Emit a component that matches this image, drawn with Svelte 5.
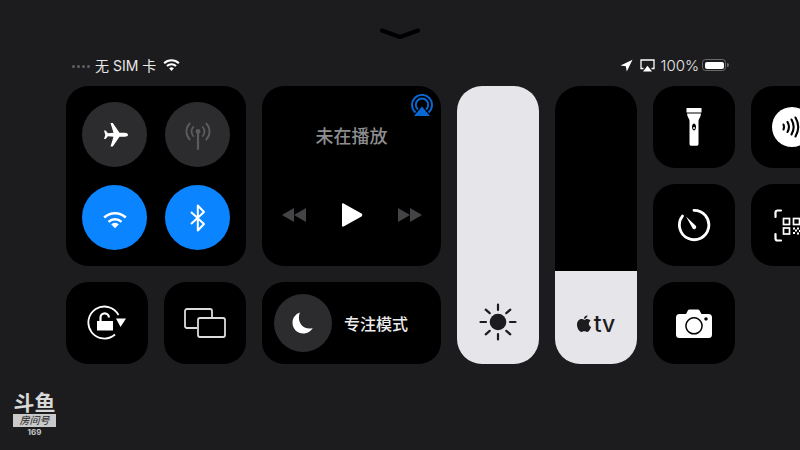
<script lang="ts">
const wifiArcs = ['M3 9.6a13 13 0 0 1 18 0', 'M6.6 13.2a8 8 0 0 1 10.8 0'];
</script>

<div class="page">
  <div class="grabber">
    <svg width="40" height="12" viewBox="0 0 40 12"><path d="M2 2.5 20 9 38 2.5" fill="none" stroke="#000" stroke-width="4" stroke-linecap="round" stroke-linejoin="round" /></svg>
  </div>

  <div class="status">
    <div class="status-left">
      <span class="dots"><i></i><i></i><i></i><i></i></span>
      <span class="carrier">无 SIM 卡</span>
      <svg class="wifi-small" width="17" height="14" viewBox="0 0 24 20">
        <path d="M1.5 7.500a15 15 0 0 1 21 0" fill="none" stroke="#fff" stroke-width="3" />
        <path d="M5.500 11.500a9.500 9.500 0 0 1 13 0" fill="none" stroke="#fff" stroke-width="3" />
        <path d="M12 18.500 8.600 14.800a5 5 0 0 1 6.800 0z" fill="#fff" />
      </svg>
    </div>
    <div class="status-right">
      <svg width="13" height="13" viewBox="0 0 13 13"><path d="M12.500.8 6.800 12.500 5.800 7.300.5 6.400z" fill="#fff" /></svg>
      <svg class="airplay-small" width="15" height="13" viewBox="0 0 15 13">
        <path d="M3.500 9.500H1V1h13v8.500h-2.500" fill="none" stroke="#fff" stroke-width="1.300" />
        <path d="M7.500 6.800 12 12.500H3z" fill="#fff" />
      </svg>
      <span class="percent">100%</span>
      <div class="battery"><div class="charge"></div></div>
      <div class="nub"></div>
    </div>
  </div>

  <div class="grid">
    <div class="tile connectivity">
      <div class="circle">
        <svg width="30" height="30" viewBox="0 0 30 30"><path d="M28 15c0-1.400-1.500-2.200-3.200-2.200h-5.300L12.800 3h-2.300l3 9.800-5.600.5-2.300-2.800H4l1.300 4.500L4 19h1.600l2.300-2.800 5.600.5-3 9.800h2.300l6.700-9.800h5.300c1.700 0 3.200-.8 3.200-1.700z" fill="#fff" /></svg>
      </div>
      <div class="circle">
        <svg width="30" height="32" viewBox="0 0 30 32" fill="none" stroke="#5c5c5e" stroke-width="1.800" stroke-linecap="round">
          <path d="M15 15v15" stroke-width="2.200" />
          <circle cx="15" cy="12.500" r="2.400" fill="#5c5c5e" stroke="none" />
          <path d="M10.300 17a6.500 6.500 0 0 1 0-9" />
          <path d="M19.700 8a6.500 6.500 0 0 1 0 9" />
          <path d="M6.700 20.500a11.500 11.500 0 0 1 0-16" />
          <path d="M23.300 4.500a11.500 11.500 0 0 1 0 16" />
        </svg>
      </div>
      <div class="circle on">
        <svg width="30" height="24" viewBox="0 0 24 20" fill="none" stroke="#fff" stroke-width="2.100">
          {#each wifiArcs as d}<path {d} />{/each}
          <path d="M12 18.500 8.800 15.300a4.600 4.600 0 0 1 6.400 0z" fill="#fff" stroke="none" />
        </svg>
      </div>
      <div class="circle on">
        <svg width="20" height="28" viewBox="0 0 20 28"><path d="M3 8 16 20 9.800 26.500V1.500L16 8 3 20" fill="none" stroke="#fff" stroke-width="2" stroke-linejoin="round" /></svg>
      </div>
    </div>

    <div class="tile media">
      <svg class="airplay" width="24" height="24" viewBox="0 0 24 24" fill="none" stroke="#0a68d4" stroke-width="1.900">
        <path d="M5.500 18.500a10 10 0 1 1 13 0" />
        <path d="M8 15.500a6.200 6.200 0 1 1 8 0" />
        <path d="M12 12.500 20 22H4z" fill="#0a68d4" stroke="none" />
      </svg>
      <div class="title">未在播放</div>
      <div class="controls">
        <svg width="24" height="14" viewBox="0 0 24 14" fill="#444446"><path d="M12 0v14L0 7z" /><path d="M24 0v14L12 7z" /></svg>
        <svg width="22" height="24" viewBox="0 0 22 24"><path d="M1 1.500c0-1 .8-1.400 1.600-1L20.500 10.600c1 .6 1 2.200 0 2.800L2.600 23.500c-.8.4-1.600 0-1.600-1z" fill="#fff" /></svg>
        <svg width="24" height="14" viewBox="0 0 24 14" fill="#444446"><path d="M0 0v14l12-7z" /><path d="M12 0v14l12-7z" /></svg>
      </div>
    </div>

    <div class="tile brightness">
      <svg width="40" height="40" viewBox="0 0 40 40" stroke="#1c1c1e" stroke-width="2.200" stroke-linecap="round">
        <circle cx="20" cy="20" r="8.300" fill="#1c1c1e" stroke="none" />
        <path d="M20 2.500v5.500M20 32v5.500M2.500 20H8M32 20h5.500M7.700 7.700l4 3.500M28.300 28.800l4 3.500M7.700 32.300l4-3.500M28.300 11.200l4-3.500" />
      </svg>
    </div>

    <div class="tile volume">
      <div class="fill">
        <svg width="15" height="18" viewBox="0 0 17 20"><path d="M11.800 0c.2 1.700-1.600 4.200-3.900 4C7.600 2 9.600.2 11.800 0zM8.100 5.200c1 0 2-.9 3.600-.9 1.500 0 2.900.8 3.700 2-2.900 1.800-2.400 5.900.6 7.100-.8 2.200-2.600 5.600-4.500 5.600-1.200 0-1.800-.8-3.200-.8s-2.100.8-3.200.8C2.700 19 0 14.700 0 10.800c0-3.800 2.400-6.400 5-6.400 1.400 0 2.300.8 3.100.8z" fill="#1c1c1e" /></svg>
        <span class="tv">tv</span>
      </div>
    </div>

    <div class="tile flash">
      <svg width="16" height="38" viewBox="0 0 16 38" fill="#fff">
        <path d="M.5 0h15v4.500H.5z" />
        <path fill-rule="evenodd" d="M1 5.500h14c0 3.500-2.500 5-2.500 7.500v23c0 1-.7 1.800-1.800 1.800H5.300c-1.100 0-1.800-.8-1.800-1.800V13C3.500 10.500 1 9 1 5.500zM8 15.500a2 3.500 0 1 0 .01 0z" />
        <circle cx="8" cy="20" r="1" />
      </svg>
    </div>

    <div class="tile nfc-tile">
      <div class="nfc">
        <svg width="20" height="22" viewBox="0 0 20 22" fill="none" stroke="#000" stroke-width="2.100" stroke-linecap="round">
          <path d="M1.500 8.500a6 6 0 0 1 0 5" />
          <path d="M5.500 6a10 10 0 0 1 0 10" />
          <path d="M9.500 3.500a15 15 0 0 1 0 15" />
          <path d="M13.500 1.500a19 19 0 0 1 0 19" />
        </svg>
      </div>
    </div>

    <div class="tile timer">
      <svg width="34" height="34" viewBox="0 0 34 34" fill="none" stroke="#fff" stroke-width="2.800" stroke-linecap="round">
        <path d="M17 2.300A14.700 14.700 0 1 1 5.500 8" />
        <path d="M9 8.500 19 18a2.200 2.200 0 0 1-3.200 2.800z" fill="#fff" stroke="none" />
      </svg>
    </div>

    <div class="tile qr-tile">
      <svg width="36" height="33" viewBox="0 0 36 33" fill="none" stroke="#fff">
        <g stroke-width="2.200" stroke-linecap="round">
          <path d="M7 1.500H3.500a2 2 0 0 0-2 2V8M29 1.500h3.500a2 2 0 0 1 2 2V8M7 31.500H3.500a2 2 0 0 1-2-2V25M29 31.500h3.500a2 2 0 0 0 2-2V25" />
        </g>
        <g stroke-width="1.700">
          <rect x="9.500" y="9.500" width="6" height="6" />
          <rect x="19.500" y="9.500" width="6" height="6" />
          <rect x="9.500" y="19" width="6" height="6" />
        </g>
        <path d="M19 18.500h2v2h-2zM23 18.500h2v2h-2zM21 20.500h2v2h-2zM25 21h2v2h-2zM19 23h2v2h-2zM23 23.500h2v2h-2z" fill="#fff" stroke="none" />
      </svg>
    </div>

    <div class="tile camera">
      <svg width="36" height="29" viewBox="0 0 36 29">
        <path fill-rule="evenodd" d="M3.500 5H10l2-3.700c.3-.5.800-.8 1.400-.8h8.600c.6 0 1.100.3 1.400.8L25.500 5H32.500A3.500 3.500 0 0 1 36 8.500v17a3.500 3.500 0 0 1-3.500 3.500h-29A3.500 3.500 0 0 1 0 25.500v-17A3.500 3.500 0 0 1 3.500 5zM18 8a8.800 8.800 0 1 0 .01 0zM18 9.500a7.300 7.300 0 1 1-.01 0zM30 8.200a1.700 1.700 0 1 0 .01 0z" fill="#fff" />
      </svg>
    </div>

    <div class="tile rotation">
      <svg width="40" height="38" viewBox="0 0 40 38" fill="none" stroke="#fff" stroke-width="1.800">
        <path d="M28 30.500A16 16 0 1 1 31.500 11" />
        <path d="M29 14.500h10L33.500 23z" fill="#fff" stroke="none" />
        <path d="M10 17h16v9.500H10z" fill="#fff" stroke="none" />
        <path d="M13.500 17v-3.500a4.200 4.200 0 0 1 8.400 0" stroke-width="2.200" />
      </svg>
    </div>

    <div class="tile mirror">
      <svg width="42" height="30" viewBox="0 0 42 30" fill="none" stroke="#dcdcdc" stroke-width="1.800">
        <path d="M13 20H2.900A2 2 0 0 1 1 18V3a2 2 0 0 1 2-2h23a2 2 0 0 1 2 2v6" />
        <rect x="14" y="10" width="27" height="19" rx="2" />
      </svg>
    </div>

    <div class="tile focus">
      <div class="moon-circle">
        <svg width="24" height="24" viewBox="0 0 24 24"><path d="M8.800 1.500C4.500 3 1.500 7 1.500 11.700c0 6 4.800 10.800 10.800 10.800 4 0 7.500-2.200 9.400-5.500-1 .4-2.200.6-3.300.6-6 0-10.500-4.700-10.500-10.500 0-2 .3-3.700.9-5.600z" fill="#fff" /></svg>
      </div>
      <span class="focus-label">专注模式</span>
    </div>
  </div>

  <div class="watermark">
    <div class="brand">斗鱼</div>
    <div class="room">房间号</div>
    <div class="room-id">169</div>
  </div>
</div>

<style>
:global(body) {
  background: #1c1c1e;
}

.page {
  position: relative;
  box-sizing: border-box;
  width: 800px;
  height: 450px;
  padding-top: 28px;
  overflow: hidden;
  font-family: Inter, "Noto Sans CJK SC", sans-serif;
  background: #1c1c1e;
}

.grabber {
  display: flex;
  justify-content: center;
  height: 12px;
}

.status {
  display: flex;
  align-items: center;
  justify-content: space-between;
  height: 20px;
  margin-top: 15px;
  padding: 0 71px 0 72px;
  color: #e8e8e8;
}

.status-left,
.status-right {
  display: flex;
  align-items: center;
}

.dots {
  display: flex;
  gap: 2px;
  margin-top: 3px;
}

.dots i {
  width: 3px;
  height: 3px;
  background: #5f5f61;
  border-radius: 50%;
}

.carrier {
  margin-left: 5px;
  font-size: 14px;
}

.wifi-small {
  margin-left: 7px;
}

.airplay-small {
  margin-left: 7px;
}

.percent {
  margin-left: 6px;
  font-size: 15px;
  font-weight: 300;
}

.battery {
  box-sizing: border-box;
  width: 24px;
  height: 12px;
  margin-left: 3px;
  padding: 1.500px;
  border: 1px solid #6a6a6c;
  border-radius: 3.500px;
}

.charge {
  width: 100%;
  height: 100%;
  background: #fff;
  border-radius: 2px;
}

.nub {
  width: 2px;
  height: 4px;
  margin-left: 1px;
  background: #6a6a6c;
  border-radius: 0 2px 2px 0;
}

.grid {
  display: grid;
  grid-template-columns: 82px 82px 82px 81px 82px 82px 82px 82px;
  grid-template-rows: repeat(3, 82px);
  gap: 16px;
  margin-top: 11px;
  margin-left: 66px;
}

.tile {
  display: flex;
  align-items: center;
  justify-content: center;
  overflow: hidden;
  background: #000;
  border-radius: 22px;
}

.connectivity {
  display: grid;
  grid-template-columns: 65px 65px;
  grid-template-rows: 65px 65px;
  grid-column: 1 / 3;
  grid-row: 1 / 3;
  gap: 18px;
  place-content: center;
  place-items: stretch;
}

.circle {
  display: flex;
  align-items: center;
  justify-content: center;
  background: #2c2c2e;
  border-radius: 50%;
}

.circle.on {
  background: #0a84ff;
}

.media {
  position: relative;
  flex-direction: column;
  justify-content: flex-start;
  grid-column: 3 / 5;
  grid-row: 1 / 3;
}

.airplay {
  position: absolute;
  top: 8px;
  right: 7px;
}

.title {
  margin-top: 39px;
  font-size: 18px;
  font-weight: 500;
  line-height: 24px;
  color: #8e8e90;
}

.controls {
  display: flex;
  gap: 35px;
  align-items: center;
  margin-top: 54px;
}

.brightness,
.volume {
  grid-row: 1 / 4;
  align-items: flex-end;
  border-radius: 25px;
}

.brightness {
  grid-column: 5;
  padding-bottom: 22px;
  background: #e5e5ea;
}

.volume {
  grid-column: 6;
}

.fill {
  display: flex;
  gap: 2px;
  align-items: center;
  justify-content: center;
  box-sizing: border-box;
  width: 100%;
  height: 93px;
  padding-top: 12px;
  background: #e5e5ea;
}

.tv {
  font-size: 23px;
  font-weight: 500;
  line-height: 24px;
  color: #1c1c1e;
}

.flash {
  grid-column: 7;
  grid-row: 1;
}

.nfc-tile {
  grid-column: 8;
  grid-row: 1;
}

.timer {
  grid-column: 7;
  grid-row: 2;
}

.qr-tile {
  grid-column: 8;
  grid-row: 2;
}

.camera {
  grid-column: 7;
  grid-row: 3;
}

.rotation {
  grid-column: 1;
  grid-row: 3;
}

.mirror {
  grid-column: 2;
  grid-row: 3;
}

.nfc {
  display: flex;
  align-items: center;
  justify-content: center;
  width: 40px;
  height: 40px;
  background: #fff;
  border-radius: 50%;
}

.focus {
  grid-column: 3 / 5;
  grid-row: 3;
  gap: 12px;
  justify-content: flex-start;
  padding-left: 12px;
}

.moon-circle {
  display: flex;
  align-items: center;
  justify-content: center;
  width: 58px;
  height: 58px;
  background: #2c2c2e;
  border-radius: 50%;
}

.focus-label {
  font-size: 16px;
  font-weight: 500;
  color: #ececec;
}

.watermark {
  position: absolute;
  top: 391px;
  left: 13px;
  display: flex;
  flex-direction: column;
  align-items: center;
  width: 43px;
}

.brand {
  font-size: 21px;
  font-weight: 700;
  line-height: 23px;
  color: #d8d8d8;
}

.room {
  width: 100%;
  height: 13px;
  font-size: 10px;
  font-style: italic;
  line-height: 13px;
  color: #222;
  text-align: center;
  background: #c9c9c9;
}

.room-id {
  font-size: 8px;
  font-weight: 700;
  line-height: 11px;
  color: #c9c9c9;
}
</style>
